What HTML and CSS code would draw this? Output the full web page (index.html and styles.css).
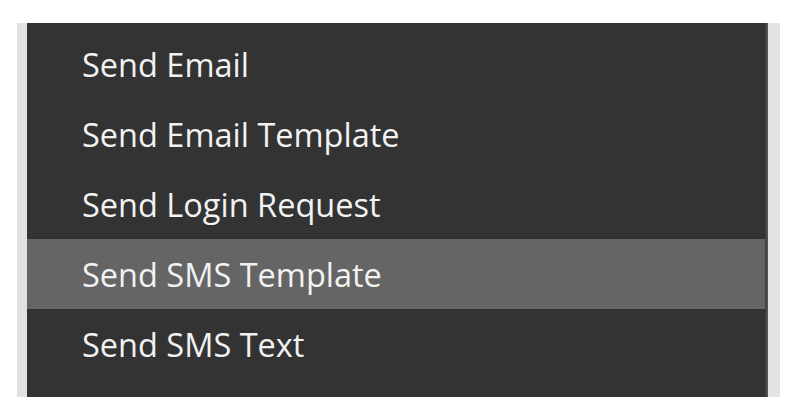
FILE: index.html
```html
<!DOCTYPE html>
<html lang="en">
<head>
<meta charset="utf-8">
<title>Menu</title>
<link rel="stylesheet" href="styles.css">
</head>
<body>
<div class="frame">
  <div class="gutter gutter-left"></div>
  <ul class="menu">
    <li class="item">Send Email</li>
    <li class="item">Send Email Template</li>
    <li class="item">Send Login Request</li>
    <li class="item item-active">Send SMS Template</li>
    <li class="item">Send SMS Text</li>
  </ul>
  <div class="edge"></div>
  <div class="gutter gutter-right"></div>
</div>
</body>
</html>
```

FILE: styles.css
```css
html, body {
  margin: 0;
  padding: 0;
  background: #ffffff;
}

.frame {
  display: flex;
  margin: 23px 0 0 17px;
  height: 374px;
}

.gutter {
  background: #e1e1e1;
}

.gutter-left {
  width: 10px;
}

.gutter-right {
  width: 12px;
  background: #e3e3e3;
}

.edge {
  width: 3px;
  background: linear-gradient(to right, #3a3a3a, #5a5a5a);
}

.menu {
  list-style: none;
  margin: 0;
  padding: 6px 0 0 0;
  width: 738px;
  background: #333333;
  display: flex;
  flex-direction: column;
}

.item {
  height: 70px;
  display: flex;
  align-items: center;
  padding-left: 55px;
  font-family: "Open Sans", "Noto Sans", sans-serif;
  font-size: 32.5px;
  font-weight: 500;
  color: #f2f2f2;
}

.item-active {
  background: #656565;
}
```
